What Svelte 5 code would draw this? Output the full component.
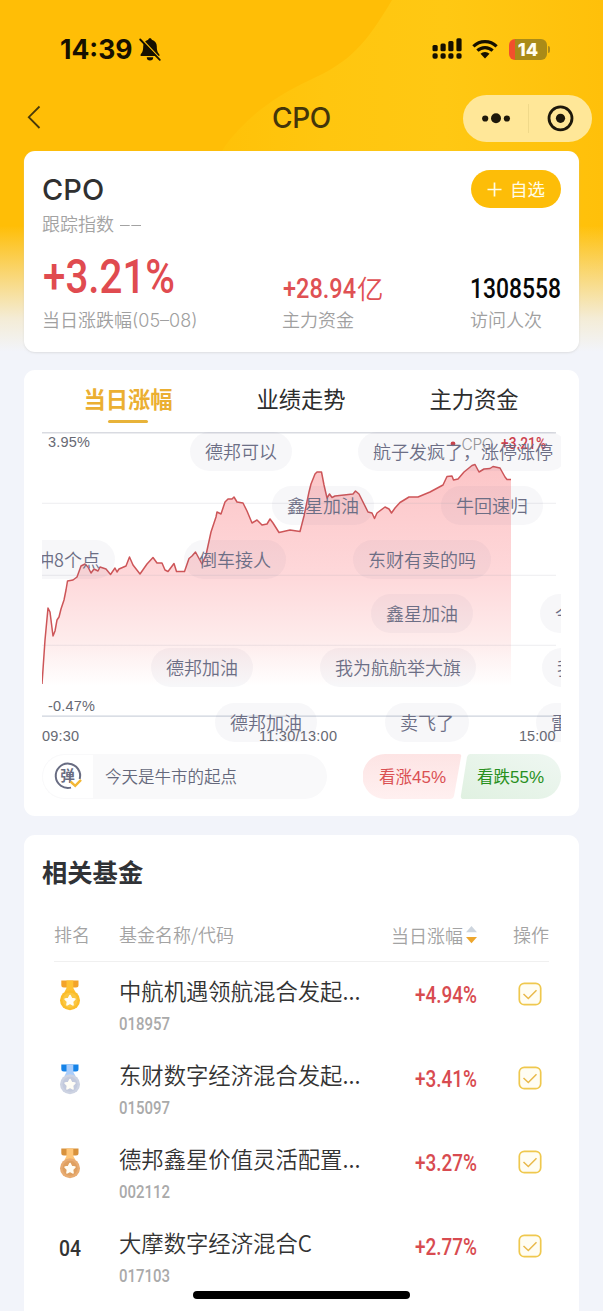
<script>
  const line =
    '42,684 45,640 48,608 50,612 53,636 55,631 57,620 59,617 61,609 64,600 66,590 67.5,581 73,580 77,577 81,566 85,564 88,567 91,573 94,569 98,571 100,567 106,569 110.5,574.5 115,568 117,572 119,569 126,566 129.5,557 133,565 140,574 147,564 153,557.5 157,563 162,563 165,570 168,571.5 174,563.5 176.5,571.5 184.5,571.5 189,558.5 192,556 195.5,552 202,564 206,555 211,532 216,517 217,512 221,514 225,502 228,499 232,499 234,497 237,502 243,503 247,511 252,523 257,520 262,525 267,524 270,519 273,523 279,532.5 290,530 300,531.5 304,516 309,492 311,484 315,474 317,472 321.5,472 324,485 327,498 329.5,494 332,497.5 335,496 353,494 355.5,491 359,494 368,512 372,513 374.5,518.5 377,513 385,507 389,509 391.5,513 395,508 400,502.5 409,497 418,497 430,492 443,485 447,476.5 452,476 453.5,480 458,479 464,472 472,465.5 475,464.5 479,472 484,469 490,468.5 493,466.5 500,468 505,477 507,479.5 511,479.5';

  const comments = [
    { text: '德邦可以', x: 148, y: 1 },
    { text: '航子发疯了，涨停涨停', x: 316, y: 1 },
    { text: '鑫星加油', x: 230, y: 55 },
    { text: '牛回速归', x: 399, y: 55 },
    { text: '冲8个点', x: -21, y: 109 },
    { text: '倒车接人', x: 142, y: 109 },
    { text: '东财有卖的吗', x: 311, y: 109 },
    { text: '鑫星加油', x: 329, y: 163 },
    { text: '今天加仓', x: 498, y: 163 },
    { text: '德邦加油', x: 109, y: 217 },
    { text: '我为航航举大旗', x: 278, y: 217 },
    { text: '我来了', x: 500, y: 217 },
    { text: '德邦加油', x: 173, y: 272 },
    { text: '卖飞了', x: 343, y: 272 },
    { text: '雷神', x: 494, y: 272 }
  ];

  const funds = [
    { name: '中航机遇领航混合发起...', code: '018957', change: '+4.94%', medal: ['#f3a32b', '#ffc234', '#fbbd2a', '#fbc741'] },
    { name: '东财数字经济混合发起...', code: '015097', change: '+3.41%', medal: ['#1583e8', '#a9cdfb', '#cdd3e2', '#c3cadd'] },
    { name: '德邦鑫星价值灵活配置...', code: '002112', change: '+3.27%', medal: ['#d8923c', '#ffc678', '#e8ac72', '#dfa061'] },
    { name: '大摩数字经济混合C', code: '017103', change: '+2.77%', medal: null }
  ];
</script>

{#snippet num(text, w, size, color, weight)}
  <svg class="num" width={w} height={size} role="img" aria-label={text}>
    <text x="0" y={size * 0.86} textLength={w} lengthAdjust="spacingAndGlyphs" font-size={size} fill={color} font-weight={weight}>{text}</text>
  </svg>
{/snippet}

<div class="page">
  <svg class="backdrop" width="603" height="370" viewBox="0 0 603 370">
    <defs>
      <linearGradient id="fade" x1="0" y1="0" x2="0" y2="1">
        <stop offset="0.61" stop-color="#f2f4fa" stop-opacity="0" />
        <stop offset="0.72" stop-color="#f2f4fa" stop-opacity=".38" />
        <stop offset="0.86" stop-color="#f2f4fa" stop-opacity=".85" />
        <stop offset="0.95" stop-color="#f2f4fa" />
      </linearGradient>
      <linearGradient id="glow" x1="0" y1="0" x2="1" y2="0">
        <stop offset="0" stop-color="#ffc107" />
        <stop offset=".3" stop-color="#ffc60f" />
        <stop offset=".6" stop-color="#ffc813" />
        <stop offset="1" stop-color="#ffc00a" />
      </linearGradient>
    </defs>
    <rect width="603" height="370" fill="#ffbe06" />
    <path d="M392 0C366 44 350 62 310 80C258 104 220 139 206 185V370H603V0Z" fill="url(#glow)" />
    <rect width="603" height="370" fill="url(#fade)" />
  </svg>

  <header class="status">
    <div class="clock">
      <span>14:39</span>
      <svg width="24" height="26" viewBox="0 0 24 26">
        <path d="M12 2.3c1 0 1.7.7 1.8 1.5 3.2.8 5 3.4 5 6.5 0 5 1.1 6.5 2.6 8.1v1.5H2.6v-1.5c1.5-1.6 2.6-3.1 2.6-8.1 0-3.1 1.8-5.7 5-6.5.1-.8.8-1.5 1.800-1.5Z" fill="#171000" />
        <path d="M8.8 21.2h6.4a3.2 3.2 0 0 1-6.4 0Z" fill="#171000" />
        <path d="M3.200 2.600 22.500 23" stroke="#ffbe06" stroke-width="1.600" />
        <path d="M2.200 3.500 21.800 23.800" stroke="#171000" stroke-width="1.800" stroke-linecap="round" />
      </svg>
    </div>
    <div class="signals">
      <svg width="31" height="24" viewBox="0 0 31 24" fill="#151000">
        <rect x="0.5" y="8" width="5.2" height="6.2" rx="1.5" />
        <rect x="8.5" y="6.4" width="5.2" height="7.8" rx="1.5" />
        <rect x="16.3" y="4" width="5.2" height="10.2" rx="1.5" />
        <rect x="24.4" y="1.3" width="5.2" height="12.9" rx="1.5" />
        <rect x="0.5" y="16.2" width="5.2" height="5.6" rx="1.8" />
        <rect x="8.5" y="16.2" width="5.2" height="5.6" rx="1.8" />
        <rect x="16.3" y="16.2" width="5.2" height="5.6" rx="1.8" />
        <rect x="24.4" y="16.2" width="5.2" height="5.6" rx="1.8" />
      </svg>
      <svg width="26" height="21" viewBox="0 0 26 21">
        <g fill="none" stroke="#151000" stroke-width="3.2">
          <path d="M1.4 8.3a16.6 16.6 0 0 1 23.2 0" />
          <path d="M5.4 12.7a10.9 10.9 0 0 1 15.2 0" />
        </g>
        <path d="M8.5 15.8a6.4 6.4 0 0 1 9 0L13 20.4Z" fill="#151000" />
      </svg>
      <div class="battery"><span>14</span></div>
    </div>
  </header>

  <nav class="nav">
    <svg class="back" width="14" height="24" viewBox="0 0 14 24"><path d="M12.5 1.5 1.8 12.2 12.5 23" fill="none" stroke="#493909" stroke-width="1.8" /></svg>
    <div class="title">CPO</div>
    <div class="capsule">
      <svg width="129" height="47" viewBox="0 0 129 47">
        <g fill="#1d180a">
          <circle cx="22.2" cy="23.5" r="3.1" />
          <circle cx="33" cy="23.2" r="5" />
          <circle cx="43.9" cy="23.5" r="3.1" />
          <circle cx="97.500" cy="23.3" r="4.6" />
        </g>
        <circle cx="97.500" cy="23.3" r="11.500" fill="none" stroke="#1d180a" stroke-width="2.8" />
        <path d="M65.500 9V38" stroke="#f0d98a" stroke-width="1" />
      </svg>
    </div>
  </nav>

  <section class="card summary">
    <div class="top">
      <div>
        <h1>CPO</h1>
        <p class="track">跟踪指数 <svg width="21" height="14"><path d="M0 8.500H9.700M11.300 8.500H21" stroke="#a3a3a3" stroke-width="1.1" /></svg></p>
      </div>
      <button>
        <svg width="15" height="15"><path d="M7.5 0.5V14.5M0.5 7.5H14.5" stroke="#fffbe6" stroke-width="1.7" /></svg>
        自选
      </button>
    </div>
    <div class="stats">
      <div class="stat">{@render num('+3.21%', 132, 48, '#e04b50', 500)}<p>当日涨跌幅<span class="date">(05–08)</span></p></div>
      <div class="stat">
        <div class="amount">{@render num('+28.94', 73, 28, '#df5154', 500)}<span>亿</span></div>
        <p>主力资金</p>
      </div>
      <div class="stat">{@render num('1308558', 91, 28, '#080808', 500)}<p>访问人次</p></div>
    </div>
  </section>

  <section class="card trend">
    <div class="tabs">
      <div class="tab active">当日涨幅</div>
      <div class="tab">业绩走势</div>
      <div class="tab">主力资金</div>
    </div>
    <div class="chart">
      <svg width="519" height="316" viewBox="42 431 519 316">
        <defs>
          <linearGradient id="area" gradientUnits="userSpaceOnUse" x1="0" y1="464" x2="0" y2="686">
            <stop offset="0" stop-color="#fcc5c7" />
            <stop offset=".5" stop-color="#fed8da" />
            <stop offset=".8" stop-color="#feecec" />
            <stop offset="1" stop-color="#fff" />
          </linearGradient>
        </defs>
        <path d="M42 432.7H556" stroke="#d9dbe1" stroke-width="1.4" />
        <polygon points={line + ' 511,686 42,686'} fill="url(#area)" />
        <path d="M42 503.3H556M42 575.3H556M42 645.3H556" stroke="#a5a5b5" stroke-opacity=".2" />
        <path d="M42 716.2H556" stroke="#ced3dd" stroke-width="1.3" />
        <polyline points={line} fill="none" stroke="#cd5558" stroke-width="1.5" stroke-linejoin="round" />
        <g class="axis">
          <text x="48" y="447" textLength="42">3.95%</text>
          <text x="48" y="710.5" textLength="47">-0.47%</text>
          <text x="42" y="740.5" textLength="37">09:30</text>
          <text x="259" y="740.5" textLength="78">11:30/13:00</text>
          <text x="519" y="740.5" textLength="36.5">15:00</text>
        </g>
        <circle cx="453" cy="443.8" r="2.4" fill="#cf4147" />
        <text class="legend" x="461.5" y="449.5" textLength="32">CPO</text>
        <text class="gain" x="501" y="449" textLength="45" lengthAdjust="spacingAndGlyphs">+3.21%</text>
      </svg>
      {#each comments as c}
        <span class="comment" style="left:{c.x}px;top:{c.y}px">{c.text}</span>
      {/each}
    </div>
    <div class="actions">
      <div class="input">
        <div class="toggle">
          <svg width="30" height="30" viewBox="0 0 30 30">
            <path d="M26.700 18A12.200 12.200 0 1 0 18 26.600" fill="none" stroke="#686c82" stroke-width="2" />
            <text x="14.500" y="19.800" text-anchor="middle">弹</text>
            <path d="m17.500 20.500 4.700 4.300 5.800-6" fill="none" stroke="#f3b735" stroke-width="2.4" />
          </svg>
        </div>
        <span>今天是牛市的起点</span>
      </div>
      <div class="vote">
        <svg width="198" height="45" viewBox="0 0 198 45">
          <defs>
            <linearGradient id="up" x1="0" y1="0" x2="0" y2="1"><stop offset="0" stop-color="#fde4e4" /><stop offset="1" stop-color="#fff0f0" /></linearGradient>
            <linearGradient id="down" x1="0" y1="1" x2="1" y2="0"><stop offset="0" stop-color="#e0f1e1" /><stop offset="1" stop-color="#eff7f2" /></linearGradient>
          </defs>
          <path d="M22 0H96Q99 0 98 3L91 42Q90 45 87 45H22A22.3 22.3 0 0 1 22 0Z" fill="url(#up)" />
          <path d="M107 0H175.500A22.3 22.3 0 0 1 175.500 45H101Q97 45 98 41L104 3Q105 0 107 0Z" fill="url(#down)" />
        </svg>
        <span class="up">看涨<b>45%</b></span>
        <span class="down">看跌<b>55%</b></span>
      </div>
    </div>
  </section>

  <section class="card funds">
    <h2>相关基金</h2>
    <div class="row head">
      <span>排名</span>
      <span>基金名称/代码</span>
      <span class="sort">当日涨幅<svg width="11" height="18" viewBox="0 0 11 18"><path d="M5.500 0 11 6.200H0Z" fill="#cdd5de" /><path d="M5.500 17.200 0 11H11Z" fill="#eda62d" /></svg></span>
      <span class="op">操作</span>
    </div>
    {#each funds as f, i}
      <div class="row">
        <div class="rank">
          {#if f.medal}
            <svg width="22" height="32" viewBox="0 0 22 32">
              <path d="M2.300 .600H19.500V5Q19.500 7.500 17 7.500H4.800Q2.300 7.500 2.300 5Z" fill={f.medal[0]} />
              <path d="M7.500 .600H14.300V8L16.500 12H5.500L7.500 8Z" fill={f.medal[1]} />
              <circle cx="11" cy="20.300" r="10" fill={f.medal[2]} />
              <circle cx="11" cy="20.300" r="7.500" fill={f.medal[3]} />
              <path d="m11 15.600 1.500 3 3.300.5-2.400 2.400.5 3.300-2.900-1.500-2.900 1.500.5-3.300-2.400-2.400 3.300-.5Z" fill="#fffdf5" stroke="#fffdf5" stroke-width="1.800" stroke-linejoin="round" />
            </svg>
          {:else}
            {@render num('0' + (i + 1), 22, 22, '#333', 500)}
          {/if}
        </div>
        <div class="fund">
          <div class="name">{f.name}</div>
          {@render num(f.code, 51, 17.5, '#aaa', 500)}
        </div>
        <div class="change">{@render num(f.change, 62, 23, '#d84b50', 500)}</div>
        <svg class="check" width="24" height="24" viewBox="0 0 24 24">
          <rect x="1.300" y="1.300" width="21.400" height="21.400" rx="5" fill="#fffdf3" stroke="#efc84e" stroke-width="1.700" />
          <path d="m5.500 12 4.800 4.500 8.200-8.200" fill="none" stroke="#e9b94b" stroke-width="1.500" />
        </svg>
      </div>
    {/each}
  </section>
  <div class="home"></div>
</div>

<style>
  :global(body) { background: #f2f4fa; }
  * { box-sizing: border-box; }
  .page { position: relative; width: 603px; height: 1311px; overflow: hidden; background: #f2f4fa; font-family: "Noto Sans CJK SC", sans-serif; color: #333; }
  svg { display: block; flex: none; }
  p, h1, h2 { margin: 0; }
  .backdrop { position: absolute; left: 0; top: 0; }
  .num { overflow: visible; font-family: Roboto, sans-serif; }
  .status, .nav, .card { position: relative; }
  .status { height: 94px; padding: 36px 56px 0 60px; display: flex; justify-content: space-between; align-items: flex-start; }
  .clock { display: flex; align-items: center; gap: 5px; height: 26px; font: 700 26.500px/26px Inter, sans-serif; color: #171000; }
  .signals { display: flex; align-items: center; height: 26px; }
  .signals svg:nth-child(2) { margin: 0 11px 1px 9px; }
  .battery { position: relative; width: 38px; height: 21px; border-radius: 6px; background: linear-gradient(90deg, #f2502c 6px, #aa8b18 6px); font: 800 18px/21px Inter, sans-serif; color: #fffdf0; text-align: center; }
  .battery::after { content: ""; position: absolute; right: -3px; top: 7px; width: 2px; height: 7px; border-radius: 0 2px 2px 0; background: #ad8a19; }
  .nav { height: 47px; display: grid; grid-template-columns: 1fr 140px 1fr; align-items: center; padding: 0 11px 0 27px; }
  .back { margin-bottom: 3px; }
  .title { font: 500 28px/49px Inter, sans-serif; letter-spacing: -.4px; color: #43350a; text-align: center; margin-left: -16px; }
  .capsule { justify-self: end; width: 129px; height: 47px; border-radius: 24px; background: #ffe798; }
  .card { margin: 0 24px; background: #fff; border-radius: 11px; }
  .summary { margin-top: 10px; height: 200.500px; padding: 19px 18px 0; box-shadow: 0 1px 2px #ccc8; }
  .top { display: flex; justify-content: space-between; height: 82px; }
  h1 { font: 500 29px/40px Inter, sans-serif; color: #303030; }
  .track { display: flex; align-items: center; gap: 6px; font-size: 18px; line-height: 27px; font-weight: 350; color: #a3a3a3; }
  button { display: flex; align-items: center; gap: 8px; width: 90px; height: 38px; padding: 0 15px 0 16px; border: 0; border-radius: 19px; background: #fdbd08; color: #fffbe6; font: 400 17.500px/38px "Noto Sans CJK SC", sans-serif; white-space: nowrap; }
  .stats { display: grid; grid-template-columns: 240px 188px 91px; }
  .stat { height: 80px; display: flex; flex-direction: column; justify-content: flex-end; }
  .stat:first-child .num { margin: 0 0 2px 1px; }
  .stat p { height: 26px; font-size: 18px; line-height: 26px; margin-top: 4px; font-weight: 350; color: #a0a0a0; white-space: nowrap; }
  .date { font-family: Inter, sans-serif; font-size: 18px; line-height: 1; font-weight: 300; }
  .amount { display: flex; gap: 1px; padding-left: 1px; color: #df5154; font-size: 26.500px; line-height: 28px; font-weight: 350; }
  .trend { margin-top: 18.500px; height: 446px; padding: 0 18px; }
  .tabs { display: grid; grid-template-columns: repeat(3, 173px); height: 61px; }
  .tab { text-align: center; font-size: 22.300px; line-height: 57px; font-weight: 400; color: #2d2d2d; margin-left: -1px; }
  .active { color: #ebaf32; font-weight: 600; position: relative; }
  .active::after { content: ""; position: absolute; left: 67px; top: 50px; width: 40px; height: 3px; border-radius: 2px; background: #e8b339; }
  .chart { position: relative; height: 316px; overflow: hidden; }
  .axis { font: 14.500px "Liberation Sans", sans-serif; fill: #676973; }
  .legend { font: 300 15.500px Inter, sans-serif; fill: #999; }
  .gain { font: 500 16px Roboto, sans-serif; fill: #d33e49; }
  .comment { position: absolute; height: 39px; padding: 0 15px; border-radius: 19.500px; background: rgba(92, 92, 135, .05); color: #6c6e85; font-size: 18px; line-height: 38px; font-weight: 350; white-space: nowrap; }
  .actions { display: flex; justify-content: space-between; padding-top: 7px; }
  .input { display: flex; width: 285px; height: 45px; border-radius: 23px; overflow: hidden; background: #f9f9fa; font-size: 16.500px; line-height: 44px; font-weight: 350; color: #65687b; }
  .toggle { width: 51px; height: 45px; padding: 6px 0 0 10px; margin-right: 12px; background: #fff; border: 1px solid #f9f9fa; border-right: 0; border-radius: 23px 0 0 23px; }
  .toggle text { font: 700 14.500px "Noto Sans CJK SC", sans-serif; fill: #686c82; }
  .vote { position: relative; width: 198px; height: 45px; font-size: 16.500px; line-height: 44px; }
  .vote span { position: absolute; top: 0; white-space: nowrap; }
  .vote b { font: 400 17px "Liberation Sans", sans-serif; }
  .up { left: 16px; color: #da5053; }
  .down { left: 114px; color: #289020; }
  .funds { margin-top: 19px; height: 500px; padding: 0 30px; }
  h2 { margin-left: -12px; padding-top: 13px; font-size: 25.300px; line-height: 46px; font-weight: 700; height: 74px; color: #303236; }
  .row { display: grid; grid-template-columns: 65px 272px 102px 56px; height: 84px; }
  .head { height: 53px; border-bottom: 1px solid #f0f0f0; font-size: 18px; line-height: 50px; font-weight: 350; color: #a3a3a3; }
  .head > span { white-space: nowrap; }
  .sort { display: flex; align-items: center; gap: 3px; margin-right: 16px; justify-content: flex-end; }
  .op { margin-left: 20px; }
  .rank { padding: 18px 0 0 4.700px; }
  .rank .num { margin-top: 5px; }
  .fund { padding-top: 9px; }
  .name { font-size: 22.350px; line-height: 38px; font-weight: 350; white-space: nowrap; height: 43.500px; }
  .change { padding: 21px 0 0 24px; }
  .check { margin: 20px 0 0 25px; }
  .home { position: absolute; left: 193px; top: 1291px; width: 217px; height: 8px; border-radius: 4px; background: #000; }
</style>
